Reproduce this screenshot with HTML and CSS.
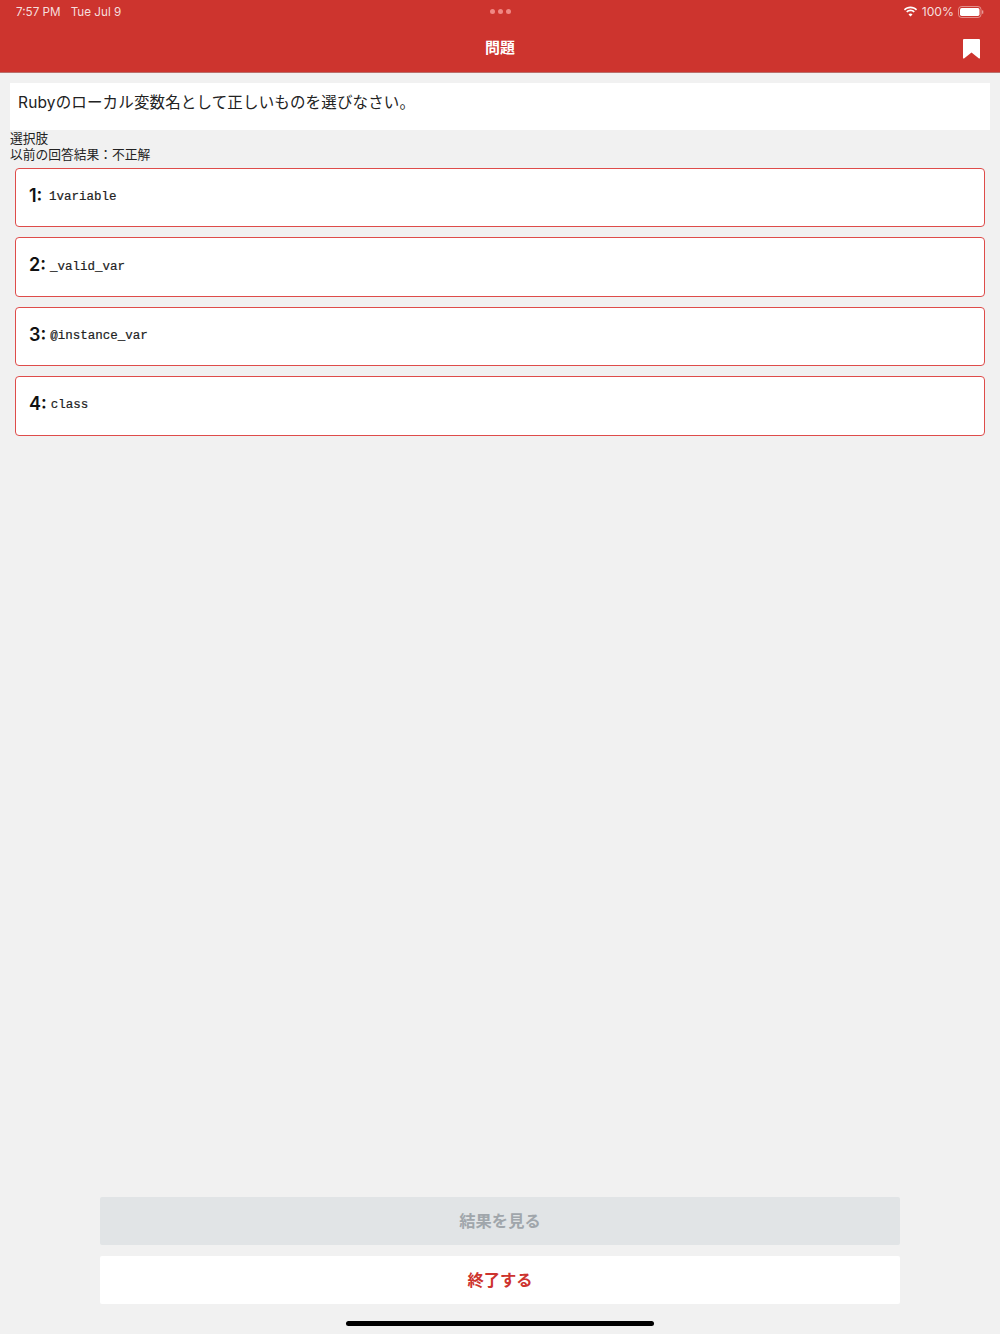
FILE: index.html
```html
<!DOCTYPE html>
<html lang="ja">
<head>
<meta charset="utf-8">
<title>問題</title>
<link rel="stylesheet" href="styles.css">
</head>
<body>
<div class="app">
  <header class="header">
    <div class="status">
      <div class="status-left"><span>7:57 PM</span><span>Tue Jul 9</span></div>
      <div class="dots"><i></i><i></i><i></i></div>
      <div class="status-right">
        <svg class="wifi" width="15" height="11" viewBox="0 0 15 11"><path d="M7.5 2.2c2.1 0 4 .8 5.5 2.2l1.1-1.2C12.3 1.4 10 .4 7.5.4S2.700 1.400.9 3.200L2 4.400C3.500 3 5.400 2.200 7.500 2.200z" fill="#fff"/><path d="M7.500 5.300c1.200 0 2.300.5 3.200 1.300l1.100-1.200c-1.200-1.100-2.700-1.800-4.300-1.800s-3.100.7-4.300 1.800l1.100 1.200c.9-.8 2-1.300 3.200-1.300z" fill="#fff"/><path d="M7.500 10.600l2-2.200c-.5-.5-1.200-.8-2-.8s-1.500.3-2 .8z" fill="#fff"/></svg>
        <span class="pct">100%</span>
        <svg class="battery" width="26" height="12" viewBox="0 0 26 12"><rect x=".5" y=".5" width="22.500" height="11" rx="3" fill="none" stroke="#fff" stroke-opacity=".45"/><rect x="2" y="2" width="19.500" height="8" rx="1.700" fill="#fff"/><rect x="24" y="4.200" width="1.300" height="3.600" rx=".6" fill="#fff" fill-opacity=".5"/></svg>
      </div>
    </div>
    <div class="nav">
      <h1 class="title">問題</h1>
      <svg class="bookmark" width="17" height="20" viewBox="0 0 17 20"><path d="M1 0h15a1 1 0 0 1 1 1v18a.6.6 0 0 1-1 .4L8.500 13.400 1 19.400a.6.6 0 0 1-1-.4V1a1 1 0 0 1 1-1z" fill="#fff"/></svg>
    </div>
  </header>

  <main class="main">
    <div class="question">Rubyのローカル変数名として正しいものを選びなさい。</div>
    <div class="meta">選択肢</div>
    <div class="meta">以前の回答結果：不正解</div>
    <ul class="options">
      <li class="option"><span class="num">1:</span><code class="code">1variable</code></li>
      <li class="option"><span class="num">2:</span><code class="code">_valid_var</code></li>
      <li class="option"><span class="num">3:</span><code class="code">@instance_var</code></li>
      <li class="option"><span class="num">4:</span><code class="code">class</code></li>
    </ul>
  </main>

  <footer class="footer">
    <div class="btn btn-disabled">結果を見る</div>
    <div class="btn btn-end">終了する</div>
    <div class="home"></div>
  </footer>
</div>
</body>
</html>
```
FILE: styles.css
```css
* { box-sizing: border-box; }
html, body { margin: 0; padding: 0; }
body {
  background: #f1f1f1;
  color: #1c1c1c;
  font-family: "Inter", "Noto Sans CJK JP", sans-serif;
}
.app {
  width: 1000px;
  height: 1334px;
  display: flex;
  flex-direction: column;
  overflow: hidden;
}
.header {
  height: 73px;
  background: #cd342e;
  border-bottom: 1px solid #b9706c;
  color: #fff;
  flex: none;
}
.status {
  height: 23px;
  padding: 0 16px 0 16px;
  display: grid;
  grid-template-columns: 1fr auto 1fr;
  align-items: center;
  font-size: 11.700px;
  color: #f6dedd;
}
.status-left { display: flex; gap: 10px; }
.dots { display: flex; gap: 3px; }
.dots i {
  display: block;
  width: 5px;
  height: 5px;
  border-radius: 50%;
  background: #f08884;
}
.status-right {
  display: flex;
  align-items: center;
  justify-content: flex-end;
  gap: 4px;
}
.pct { font-size: 12.200px; }
.nav {
  height: 49px;
  padding-bottom: 2px;
  display: flex;
  align-items: center;
  justify-content: center;
  position: relative;
}
.title {
  margin: 0;
  font-size: 15px;
  font-weight: 700;
  font-family: "Noto Sans CJK JP", sans-serif;
}
.bookmark { position: absolute; right: 20px; top: 16px; }
.main { padding: 10px 10px 0; }
.question {
  height: 47px;
  margin-bottom: 1px;
  background: #fff;
  padding: 8px 8px 0;
  font-size: 15.500px;
  letter-spacing: .15px;
  line-height: 24px;
  color: #222;
}
.meta {
  font-size: 12.750px;
  line-height: 16.300px;
  color: #222;
}
.options {
  list-style: none;
  margin: 4.500px 5px 0;
  padding: 0;
  display: flex;
  flex-direction: column;
  gap: 10px;
}
.option {
  height: 59.400px;
  background: #fff;
  border: 1px solid #de4c4a;
  border-radius: 4px;
  padding: 0 0 1px 13px;
  display: flex;
  align-items: center;
  gap: 4px;
}
.num {
  min-width: 16px;
  font-size: 18px;
  font-weight: 600;
  color: #111;
  position: relative;
  top: -2px;
}
.code {
  font-family: "Liberation Mono", monospace;
  font-size: 12.500px;
  color: #222;
  -webkit-text-stroke: .2px #222;
}
.footer {
  margin-top: auto;
  padding-bottom: 8px;
  display: flex;
  flex-direction: column;
  align-items: center;
  gap: 11px;
}
.btn {
  width: 800px;
  height: 48px;
  padding-bottom: 2px;
  border-radius: 2px;
  display: flex;
  align-items: center;
  justify-content: center;
  font-size: 16.300px;
  font-weight: 700;
  font-family: "Noto Sans CJK JP", sans-serif;
}
.btn-disabled { background: #e1e4e6; color: #a0a6ab; }
.btn-end { background: #fff; color: #cd342e; }
.home {
  width: 308px;
  height: 5px;
  border-radius: 3px;
  background: #000;
  margin-top: 6px;
}
```
